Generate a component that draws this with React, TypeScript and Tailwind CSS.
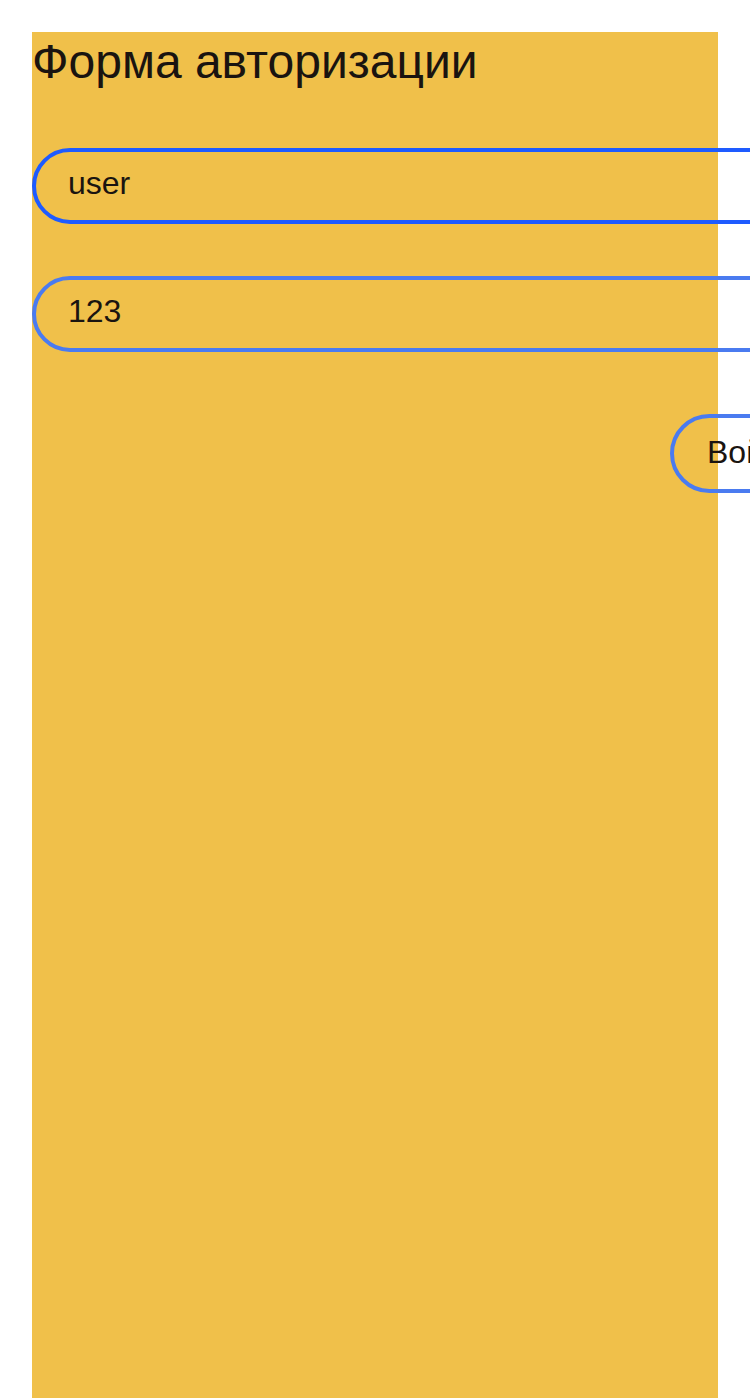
import React from 'react';

const App: React.FC = () => {
  return (
    <div className="min-h-[1398px] bg-white p-8 pb-0 font-['Liberation_Sans',Arial,sans-serif] text-[#1a1410]">
      <div className="min-h-[1366px] w-[686px] bg-[#f0c04a]">
        <h1 className="text-[48px] leading-[60px]">Форма авторизации</h1>

        <form className="mt-[56px] flex flex-col">
          <input
            defaultValue="user"
            className="h-[76px] w-[760px] shrink-0 rounded-full border-4 border-[#1e5bff] bg-transparent pb-[6px] pl-[32px] text-[32px] outline-none"
          />
          <input
            defaultValue="123"
            className="mt-[52px] h-[76px] w-[760px] shrink-0 rounded-full border-4 border-[#4a7bf0] bg-transparent pb-[6px] pl-[32px] text-[32px] outline-none"
          />
          <button
            type="button"
            className="ml-[638px] mt-[62px] h-[79px] w-[140px] shrink-0 rounded-full border-4 border-[#4a7bf0] bg-transparent pb-[4px] pl-[33px] text-left text-[32px]"
          >
            Войти
          </button>
        </form>
      </div>
    </div>
  );
};

export default App;
